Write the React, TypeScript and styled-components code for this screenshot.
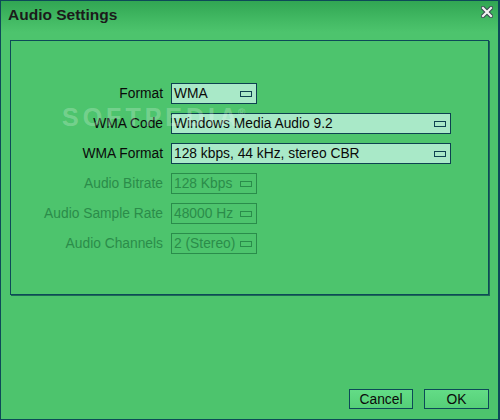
import React from "react";
import styled, { createGlobalStyle } from "styled-components";

const Global = createGlobalStyle`
  html, body { margin: 0; padding: 0; background: #4cc46c; }
  body { font-family: "Liberation Sans", Arial, sans-serif; }
  * { box-sizing: border-box; }
`;

const Window = styled.div`
  position: relative;
  width: 500px;
  height: 420px;
  border: 1px solid #0d4a58;
  border-right-width: 2px;
  background: #4dc46d;
  display: flex;
  flex-direction: column;
  overflow: hidden;
`;

const TitleBar = styled.div`
  height: 39px;
  flex: none;
  display: flex;
  justify-content: space-between;
  align-items: flex-start;
  padding: 5px 5px 0 7px;
  background: linear-gradient(#31a653 0%, #41b862 45%, #4dc46d 80%, #4dc46d 100%);
`;

const Title = styled.div`
  font-size: 15.5px;
  line-height: 17px;
  font-weight: bold;
  color: #1b1b1b;
`;

const CloseButton = styled.div`
  width: 12px;
  height: 12px;
  display: flex;
`;

const Panel = styled.div`
  margin: 0 9px 0 9px;
  height: 255px;
  flex: none;
  border: 1px solid #0d4a58;
  box-shadow: 1px 1px 0 #1d6a55;
  padding-top: 42px;
`;

const Form = styled.div`
  display: grid;
  grid-template-columns: 152px 1fr;
  column-gap: 8px;
  row-gap: 9px;
  align-items: center;
`;

const Label = styled.div<{ $disabled?: boolean }>`
  text-align: right;
  font-size: 13.8px;
  color: ${(p) => (p.$disabled ? "#2b8c4a" : "#0a0a0a")};
`;

const Combo = styled.div<{ $width: number; $disabled?: boolean }>`
  width: ${(p) => p.$width}px;
  height: 21px;
  border: 1px solid ${(p) => (p.$disabled ? "#2a8c4b" : "#0d4150")};
  background: ${(p) => (p.$disabled ? "transparent" : "#a9e9c8")};
  color: ${(p) => (p.$disabled ? "#2b8c4a" : "#0a0a0a")};
  font-size: 13.8px;
  display: flex;
  align-items: center;
  justify-content: space-between;
  padding: 0 4px 0 2px;
`;

const Arrow = styled.div<{ $disabled?: boolean }>`
  width: 12px;
  height: 6px;
  border: 1px solid ${(p) => (p.$disabled ? "#2a8c4b" : "#0d4150")};
  flex: none;
`;

const Footer = styled.div`
  flex: 1;
  display: flex;
  justify-content: flex-end;
  align-items: flex-end;
  gap: 11px;
  padding: 0 9px 10px 0;
`;

const Button = styled.div<{ $width: number }>`
  width: ${(p) => p.$width}px;
  height: 20px;
  border: 1px solid #0d4a58;
  background: linear-gradient(#63dc86, #55cf78);
  font-size: 13.8px;
  color: #0a0a0a;
  display: flex;
  align-items: center;
  justify-content: center;
`;

const Watermark = styled.div`
  position: absolute;
  left: 61px;
  top: 102px;
  font-size: 25px;
  line-height: 28px;
  font-weight: bold;
  letter-spacing: 4px;
  color: rgba(255, 255, 255, 0.24);
  pointer-events: none;
  sup {
    font-size: 10px;
    letter-spacing: 0;
    vertical-align: top;
    position: relative;
    top: -4px;
    left: -3px;
  }
`;

type Row = { label: string; value: string; width: number; disabled?: boolean };

const rows: Row[] = [
  { label: "Format", value: "WMA", width: 86 },
  { label: "WMA Code", value: "Windows Media Audio 9.2", width: 280 },
  { label: "WMA Format", value: "128 kbps, 44 kHz, stereo CBR", width: 280 },
  { label: "Audio Bitrate", value: "128 Kbps", width: 86, disabled: true },
  { label: "Audio Sample Rate", value: "48000 Hz", width: 86, disabled: true },
  { label: "Audio Channels", value: "2 (Stereo)", width: 86, disabled: true },
];

export default function App() {
  return (
    <>
      <Global />
      <Window>
        <TitleBar>
          <Title>Audio Settings</Title>
          <CloseButton>
            <svg width="12" height="12" viewBox="0 0 12 12">
              <path d="M2 2 L10 10 M10 2 L2 10" stroke="#3a4a52" strokeWidth="4.2" strokeLinecap="square" />
              <path d="M2 2 L10 10 M10 2 L2 10" stroke="#f4f4f4" strokeWidth="2.2" strokeLinecap="square" />
            </svg>
          </CloseButton>
        </TitleBar>
        <Panel>
          <Form>
            {rows.map((r) => (
              <React.Fragment key={r.label}>
                <Label $disabled={r.disabled}>{r.label}</Label>
                <Combo $width={r.width} $disabled={r.disabled}>
                  <span>{r.value}</span>
                  <Arrow $disabled={r.disabled} />
                </Combo>
              </React.Fragment>
            ))}
          </Form>
        </Panel>
        <Footer>
          <Button $width={64}>Cancel</Button>
          <Button $width={65}>OK</Button>
        </Footer>
        <Watermark>
          SOFTPEDIA<sup>®</sup>
        </Watermark>
      </Window>
    </>
  );
}
